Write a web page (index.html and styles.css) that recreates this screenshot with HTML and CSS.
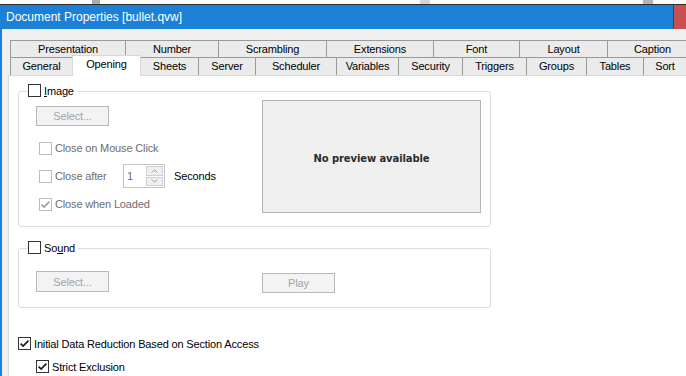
FILE: index.html
```html
<!DOCTYPE html>
<html>
<head>
<meta charset="utf-8">
<link rel="stylesheet" href="styles.css">
</head>
<body>
<div class="strip"><span class="blk blk1"></span><span class="blk blk2"></span><span class="blk blk3"></span></div>
<div class="window">
  <div class="titlebar"><span class="title">Document Properties [bullet.qvw]</span><span class="close"></span></div>
  <div class="client">
    <div class="tabs">
      <div class="row back">
        <div class="tab">Presentation</div><div class="tab">Number</div><div class="tab">Scrambling</div><div class="tab">Extensions</div><div class="tab">Font</div><div class="tab">Layout</div><div class="tab">Caption</div>
      </div>
      <div class="row front">
        <div class="tab">General</div><div class="tab sel">Opening</div><div class="tab">Sheets</div><div class="tab">Server</div><div class="tab">Scheduler</div><div class="tab">Variables</div><div class="tab">Security</div><div class="tab">Triggers</div><div class="tab">Groups</div><div class="tab">Tables</div><div class="tab">Sort</div>
      </div>
    </div>
    <div class="panel">
      <div class="group g-image">
        <div class="legend"><svg class="cb" viewBox="0 0 13 13"><rect x=".5" y=".5" width="12" height="12"/></svg><span><u>I</u>mage</span></div>
        <div class="img-left">
          <div class="btn">Select...</div>
          <div class="opts">
            <div class="opt"><svg class="cb dis" viewBox="0 0 13 13"><rect x=".5" y=".5" width="12" height="12"/></svg><span>Close on Mouse Click</span></div>
            <div class="opt"><svg class="cb dis" viewBox="0 0 13 13"><rect x=".5" y=".5" width="12" height="12"/></svg><span class="lbl-after">Close after</span>
              <div class="spin"><span class="spin-val">1</span><div class="spin-btns"><span class="sb"><svg viewBox="0 0 7 4"><path d="M.5 3.5 3.5 .8 6.5 3.5"/></svg></span><span class="sb"><svg viewBox="0 0 7 4"><path d="M.5 .5 3.5 3.2 6.5 .5"/></svg></span></div></div>
              <span class="secs">Seconds</span></div>
            <div class="opt"><svg class="cb dis" viewBox="0 0 13 13"><rect x=".5" y=".5" width="12" height="12"/><path d="M2.6 6.6 5.1 9.1 10.4 3.6"/></svg><span>Close when Loaded</span></div>
          </div>
        </div>
        <div class="preview">No preview available</div>
      </div>
      <div class="group g-sound">
        <div class="legend"><svg class="cb" viewBox="0 0 13 13"><rect x=".5" y=".5" width="12" height="12"/></svg><span>So<u>u</u>nd</span></div>
        <div class="btn snd-select">Select...</div>
        <div class="btn play">Play</div>
      </div>
      <div class="chk-row r-initial"><svg class="cb" viewBox="0 0 13 13"><rect x=".5" y=".5" width="12" height="12"/><path d="M2.6 6.6 5.1 9.1 10.4 3.6"/></svg><span>Initial Data Reduction Based on Section Access</span></div>
      <div class="chk-row r-strict"><svg class="cb" viewBox="0 0 13 13"><rect x=".5" y=".5" width="12" height="12"/><path d="M2.6 6.6 5.1 9.1 10.4 3.6"/></svg><span>Strict Exclusion</span></div>
    </div>
  </div>
</div>
</body>
</html>
```
FILE: styles.css
```css
* { box-sizing: border-box; }
html, body { margin: 0; height: 100%; overflow: hidden; }
body {
  background: #f0f0f0;
  font-family: "Liberation Sans", Arial, sans-serif;
  font-size: 11px;
  letter-spacing: -0.15px;
  color: #000;
}
.strip { height: 5px; background: #fbfbfb; border-bottom: 1px solid #2d2d2d; display: flex; }
.blk { height: 4px; display: block; }
.blk1 { margin-left: 92px; width: 8px; background: #ababab; }
.blk2 { margin-left: 320px; width: 10px; background: #d4d4d4; }
.blk3 { margin-left: 213px; width: 10px; background: #b3b3b3; }

.window { height: calc(100% - 5px); border-left: 2px solid #1c80d6; display: flex; flex-direction: column; }
.titlebar { height: 24px; flex: none; background: #1c80d6; display: flex; align-items: center; }
.title { flex: 1; padding-left: 4px; color: #fff; font-size: 12px; letter-spacing: 0; white-space: nowrap; }
.close { width: 13px; align-self: stretch; background: #c75050; border-left: 1px solid #6b3030; }

.client { flex: 1; display: flex; flex-direction: column; padding: 11px 0 0 6px; min-height: 0; }
.tabs { margin-left: 2px; flex: none; }
.row { display: grid; }
.back { grid-template-columns: 115px 93px 108px 107px 86px 88px 90px; grid-auto-rows: 17px; }
.front { grid-template-columns: 62px 68px 58px 57px 81px 62px 64px 64px 60px 57px 43px; grid-auto-rows: 18px; }
.tab {
  border-top: 1px solid #9a9a9a;
  border-left: 1px solid #9a9a9a;
  background: #ebebeb;
  text-align: center;
  white-space: nowrap;
  line-height: 16px;
}
.front .tab { line-height: 17px; }
.front .tab.sel {
  background: #fff;
  border: 1px solid #d9d9d9;
  border-bottom: none;
  margin: -2px -1px -1px 0;
  line-height: 17px;
  position: relative;
  z-index: 1;
}

.panel {
  flex: 1;
  background: #fff;
  border-top: 1px solid #d9d9d9;
  border-left: 1px solid #d9d9d9;
  padding: 15px 0 0 9px;
}
.group { position: relative; width: 473px; border: 1px solid #d9dee3; border-radius: 3px; display: flex; }
.g-image { height: 136px; }
.g-sound { height: 60px; margin-top: 21px; align-items: flex-start; }
.legend {
  position: absolute; top: -8px; left: 9px;
  background: #fff; display: flex; align-items: center; gap: 3px; padding-right: 3px;
  height: 13px;
}

.cb { width: 13px; height: 13px; flex: none; display: block; }
.cb rect { fill: #fff; stroke: #333; }
.cb path { fill: none; stroke: #1e1e1e; stroke-width: 1.7; }
.cb.dis rect { stroke: #bcbcbc; }
.cb.dis path { stroke: #9c9c9c; }

.img-left { flex: 1; padding: 14px 0 0 17px; display: flex; flex-direction: column; }
.btn {
  width: 73px; height: 20px; flex: none;
  border: 1px solid #b9b9b9; background: #f3f3f3; color: #a3a3a3;
  display: flex; align-items: center; justify-content: center;
}
.opts { margin: 10px 0 0 3px; display: flex; flex-direction: column; gap: 4px; }
.opt { height: 24px; display: flex; align-items: center; gap: 3px; color: #6d6d6d; }
.lbl-after { width: 65px; }
.spin {
  width: 42px; height: 24px; border: 1px solid #c4c4c4; background: #fff;
  display: flex; align-items: stretch;
}
.spin-val { flex: 1; padding-left: 3px; display: flex; align-items: center; color: #6d6d6d; }
.spin-btns { width: 17px; margin: 1px 1px 1px 0; display: flex; flex-direction: column; gap: 1px; }
.sb { flex: 1; border: 1px solid #d0d0d0; background: #f0f0f0; display: flex; align-items: center; justify-content: center; }
.sb svg { width: 7px; height: 4px; display: block; }
.sb path { fill: none; stroke: #a0a0a0; stroke-width: 1; }
.secs { margin-left: 6px; color: #000; }

.preview {
  margin: 8px 9px 0 0; width: 219px; height: 113px; flex: none;
  border: 1px solid #b4b4b4; background: #efefef;
  display: flex; align-items: center; justify-content: center;
  font-family: "DejaVu Sans", sans-serif; font-weight: bold; font-size: 10px; letter-spacing: -0.1px;
  color: #2b2b2b; padding-top: 3px;
}

.snd-select { margin: 22px 0 0 17px; height: 21px; }
.play { margin: 24px 0 0 153px; }

.chk-row { display: flex; align-items: center; gap: 3px; height: 13px; }
.r-initial { margin-top: 29px; }
.r-strict { margin: 10px 0 0 18px; }
```
